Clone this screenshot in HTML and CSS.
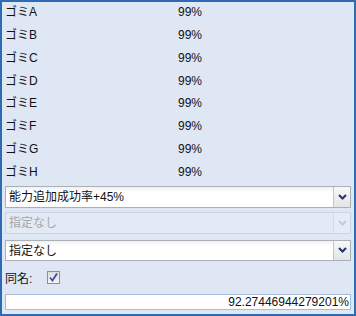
FILE: index.html
```html
<!DOCTYPE html>
<html>
<head>
<meta charset="utf-8">
<link rel="stylesheet" href="styles.css">
</head>
<body>
<div class="panel">
  <div class="list">
    <div class="row"><span class="name">ゴミA</span><span class="val">99%</span></div>
    <div class="row"><span class="name">ゴミB</span><span class="val">99%</span></div>
    <div class="row"><span class="name">ゴミC</span><span class="val">99%</span></div>
    <div class="row"><span class="name">ゴミD</span><span class="val">99%</span></div>
    <div class="row"><span class="name">ゴミE</span><span class="val">99%</span></div>
    <div class="row"><span class="name">ゴミF</span><span class="val">99%</span></div>
    <div class="row"><span class="name">ゴミG</span><span class="val">99%</span></div>
    <div class="row"><span class="name">ゴミH</span><span class="val">99%</span></div>
  </div>
  <div class="combo first">
    <span class="combo-text">能力追加成功率+45%</span>
    <span class="combo-btn"><svg width="9" height="6" viewBox="0 0 9 6"><path d="M1 1 L4.5 4.5 L8 1" fill="none" stroke="#1e3670" stroke-width="2"/></svg></span>
  </div>
  <div class="combo disabled">
    <span class="combo-text">指定なし</span>
    <span class="combo-btn"><svg width="9" height="6" viewBox="0 0 9 6"><path d="M1 1 L4.5 4.5 L8 1" fill="none" stroke="#c3cad6" stroke-width="2"/></svg></span>
  </div>
  <div class="combo third">
    <span class="combo-text">指定なし</span>
    <span class="combo-btn"><svg width="9" height="6" viewBox="0 0 9 6"><path d="M1 1 L4.5 4.5 L8 1" fill="none" stroke="#1e3670" stroke-width="2"/></svg></span>
  </div>
  <div class="check-row">
    <span class="check-label">同名:</span>
    <span class="checkbox"><svg width="11" height="11" viewBox="0 0 11 11"><path d="M2 5.5 L4.5 8.5 L9 1.5" fill="none" stroke="#3d4f9a" stroke-width="1.8"/></svg></span>
  </div>
  <div class="result">92.27446944279201%</div>
</div>
</body>
</html>
```
FILE: styles.css
```css
html, body {
  margin: 0;
  padding: 0;
}
body {
  font-family: "Liberation Sans", "Noto Sans CJK JP", sans-serif;
  font-size: 12px;
  color: #111;
}
.panel {
  box-sizing: border-box;
  width: 356px;
  height: 316px;
  border: 2px solid #2e6bb5;
  background: #dfe7f4;
  padding: 0 3px 0 3px;
  display: flex;
  flex-direction: column;
}
.list {
  display: flex;
  flex-direction: column;
}
.row {
  display: grid;
  grid-template-columns: 173px 1fr;
  height: 22.85px;
  line-height: 21px;
}
.combo {
  box-sizing: border-box;
  height: 22px;
  border: 1px solid #abb0b8;
  background: linear-gradient(#f1f1f1, #ffffff 5px, #ffffff);
  display: flex;
  align-items: stretch;
}
.combo.first {
  margin-top: 1px;
}
.combo.disabled {
  margin-top: 4px;
  border-color: #cbd4e2;
  background: #e3eaf6;
  color: #a6a6a6;
}
.combo.third {
  margin-top: 6px;
  height: 21px;
}
.combo-text {
  flex: 1;
  padding-left: 3px;
  line-height: 20px;
}
.combo-btn {
  width: 16px;
  border-left: 1px solid #c2c6cc;
  background: linear-gradient(#f7f7f7, #e4e5e8);
  display: flex;
  align-items: center;
  justify-content: center;
}
.combo.disabled .combo-btn {
  border-left-color: #d6dde8;
  background: #e6ecf6;
}
.check-row {
  display: flex;
  align-items: center;
  height: 14px;
  margin-top: 10px;
}
.check-label {
  width: 42px;
}
.checkbox {
  box-sizing: border-box;
  width: 13px;
  height: 13px;
  border: 1px solid #8e8f8f;
  background: linear-gradient(#dcdcdc, #f4f4f4);
  display: flex;
  align-items: center;
  justify-content: center;
}
.result {
  box-sizing: border-box;
  margin-top: 9px;
  height: 16px;
  border: 1px solid #a7bcd8;
  background: #ffffff;
  text-align: right;
  padding-right: 1px;
  line-height: 14px;
}
```
